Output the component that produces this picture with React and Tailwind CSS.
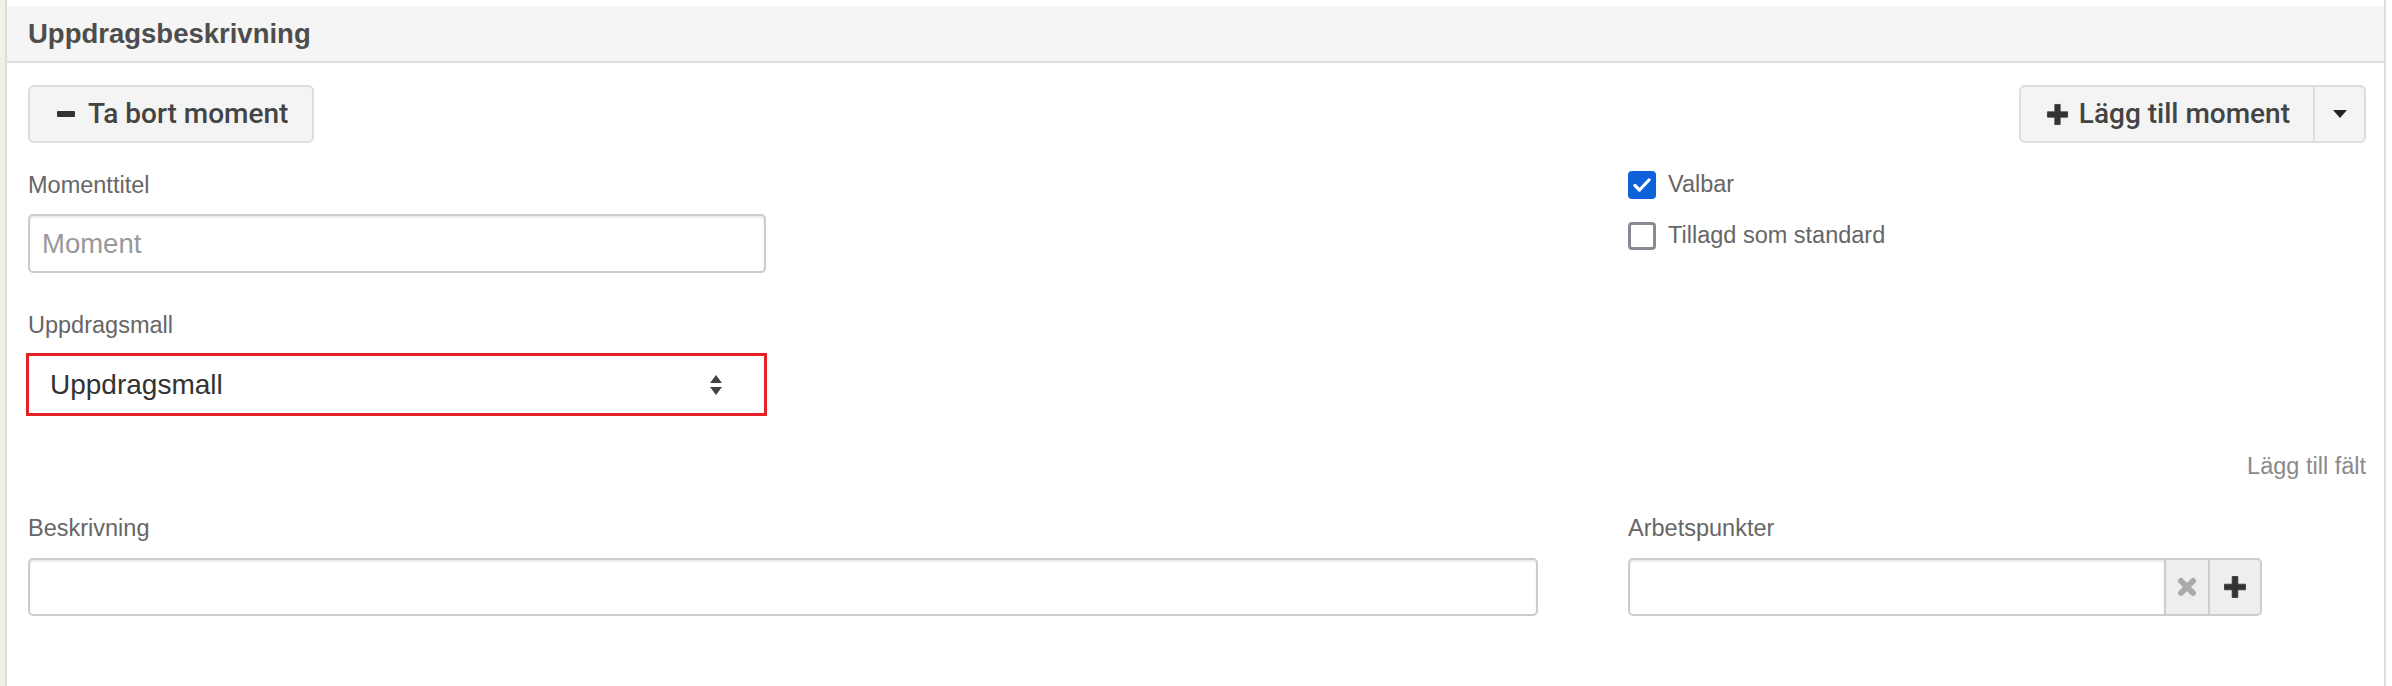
const sans = { fontFamily: '"Liberation Sans", Arial, sans-serif' };

function MinusIcon() {
  return (
    <svg width="18" height="6" viewBox="0 0 18 6" className="shrink-0">
      <rect width="18" height="6" rx="1" fill="#333" />
    </svg>
  );
}

function PlusIcon({ size = 23 }) {
  return (
    <svg width={size} height={size} viewBox="0 0 24 24" className="shrink-0">
      <path d="M9.2 1.5h5.6v7.7h7.7v5.6h-7.7v7.7H9.2v-7.7H1.5V9.2h7.7z" fill="#333" strokeLinejoin="round" stroke="#333" strokeWidth="0.8" />
    </svg>
  );
}

function Caret() {
  return (
    <svg width="14" height="8" viewBox="0 0 14 8">
      <path d="M0 0h14L7 8z" fill="#222" />
    </svg>
  );
}

function SelectArrows() {
  return (
    <svg width="12" height="20" viewBox="0 0 12 20">
      <path d="M0 8L6 0l6 8z" fill="#444" />
      <path d="M0 12h12l-6 8z" fill="#444" />
    </svg>
  );
}

function XIcon() {
  return (
    <svg width="20" height="20" viewBox="0 0 20 20" className="blur-[0.6px]">
      <path d="M4 4L16 16M16 4L4 16" stroke="#aaaaaa" strokeWidth="6" strokeLinecap="round" />
    </svg>
  );
}

function Label({ children }) {
  return (
    <div className="h-[34px] leading-[34px] text-[23.5px] text-[#666666]" style={sans}>
      {children}
    </div>
  );
}

export default function App() {
  return (
    <div className="w-[2392px] h-[686px] bg-white flex overflow-hidden" style={sans}>
      <div className="w-[5px] shrink-0 bg-[#f1f1ec]" />
      <div className="w-[2381px] shrink-0 border-x-2 border-[#dddddd] pt-[6px] flex flex-col">
        <div className="h-[57px] bg-[#f5f5f5] border-b-2 border-[#dddddd] flex items-center pl-[21px]">
          <span className="text-[27.5px] font-bold text-[#4d4d4d]">Uppdragsbeskrivning</span>
        </div>

        <div className="pl-[21px] pr-[18px] pt-[22px]">
          <div className="flex justify-between items-start">
            <button
              className="h-[58px] flex items-center gap-[13px] pl-[27px] pr-[24px] bg-[#f4f4f4] border-2 border-[#dddddd] rounded-[6px] text-[28px] font-medium text-[#444444]"
              style={{ fontFamily: 'Roboto, "Liberation Sans", sans-serif' }}
            >
              <MinusIcon />
              <span>Ta bort moment</span>
            </button>

            <div
              className="h-[58px] flex bg-[#f4f4f4] border-2 border-[#dddddd] rounded-[6px] text-[28px] font-medium text-[#444444]"
              style={{ fontFamily: 'Roboto, "Liberation Sans", sans-serif' }}
            >
              <button className="flex items-center gap-[10px] pl-[25px] pr-[23px]">
                <PlusIcon />
                <span>Lägg till moment</span>
              </button>
              <button className="w-[51px] border-l-2 border-[#dddddd] flex items-center justify-center">
                <Caret />
              </button>
            </div>
          </div>

          <div className="grid grid-cols-[1510px_1fr] gap-x-[90px] mt-[25px]">
            <div>
              <Label>Momenttitel</Label>
              <div className="mt-[12px] w-[738px] h-[59px] border-2 border-[#cccccc] rounded-[5px] shadow-[inset_0_2px_2px_rgba(0,0,0,0.075)] flex items-center pl-[12px]">
                <span className="text-[27.5px] text-[#999999]">Moment</span>
              </div>
              <div className="mt-[35px]">
                <Label>Uppdragsmall</Label>
              </div>
              <div className="mt-[11px] -ml-[2px] w-[741px] h-[63px] border-[3px] border-[#e32127] flex items-center justify-between pl-[21px] pr-[42px]">
                <span className="text-[28px] text-[#333333]">Uppdragsmall</span>
                <SelectArrows />
              </div>
            </div>

            <div className="flex flex-col">
              <div className="h-[34px] flex items-center gap-[12px]">
                <span className="w-[28px] h-[28px] rounded-[4px] bg-[#0d62d9] flex items-center justify-center">
                  <svg width="18" height="14" viewBox="0 0 18 14">
                    <path d="M2 7.5l4.5 4.5L16 2" stroke="white" strokeWidth="3.2" fill="none" strokeLinecap="round" strokeLinejoin="round" />
                  </svg>
                </span>
                <span className="text-[23.5px] text-[#666666]">Valbar</span>
              </div>
              <div className="h-[34px] mt-[17px] flex items-center gap-[12px]">
                <span className="w-[28px] h-[28px] rounded-[4px] border-[3px] border-[#8a8a97] bg-white" />
                <span className="text-[23.5px] text-[#666666]">Tillagd som standard</span>
              </div>
            </div>
          </div>

          <div className="flex justify-end mt-[34px] h-[34px] items-center">
            <span className="text-[23.5px] text-[#8a8a8a]">Lägg till fält</span>
          </div>

          <div className="grid grid-cols-[1510px_1fr] gap-x-[90px] mt-[27px]">
            <div>
              <Label>Beskrivning</Label>
              <div className="mt-[13px] w-[1510px] h-[58px] border-2 border-[#cccccc] rounded-[5px] shadow-[inset_0_2px_2px_rgba(0,0,0,0.075)]" />
            </div>
            <div>
              <Label>Arbetspunkter</Label>
              <div className="mt-[13px] flex h-[58px] w-[634px]">
                <div className="w-[538px] h-full border-2 border-[#cccccc] rounded-l-[5px] shadow-[inset_0_2px_2px_rgba(0,0,0,0.075)]" />
                <div className="w-[42px] h-full bg-[#eeeeee] border-y-2 border-[#cccccc] flex items-center justify-center">
                  <XIcon />
                </div>
                <div className="w-[54px] h-full bg-[#eeeeee] border-2 border-[#cccccc] rounded-r-[5px] flex items-center justify-center">
                  <PlusIcon size={24} />
                </div>
              </div>
            </div>
          </div>
        </div>
      </div>
      <div className="flex-1 bg-white" />
    </div>
  );
}
